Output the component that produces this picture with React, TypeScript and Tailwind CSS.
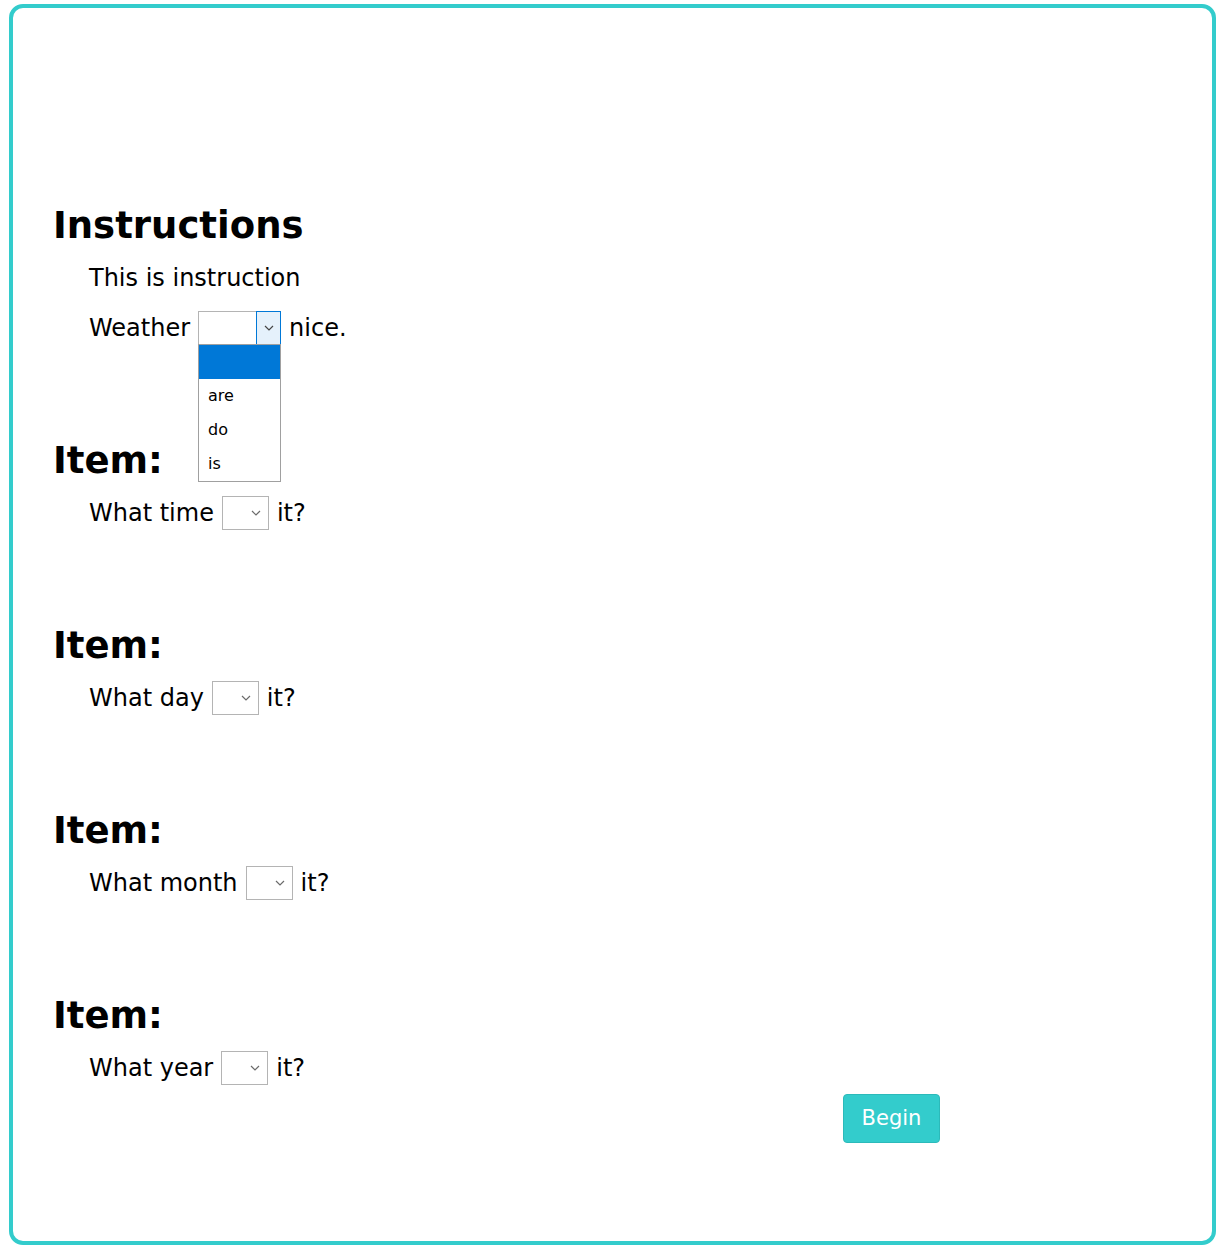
import React from 'react'

function Chevron({ color = '#6b6b6b' }: { color?: string }) {
  return (
    <svg width="10" height="6" viewBox="0 0 10 6" fill="none">
      <path d="M1 1l4 4 4-4" stroke={color} strokeWidth="1.2" />
    </svg>
  )
}

function Blank({ w = 47 }: { w?: number }) {
  return (
    <span
      className="inline-flex items-center justify-end h-[34px] border border-[#b4b4b4] bg-white pr-[7px] align-middle mx-[8px]"
      style={{ width: w }}
    >
      <Chevron />
    </span>
  )
}

function OpenBlank() {
  return (
    <span className="relative inline-flex h-[34px] w-[83px] align-middle mx-[8px]">
      <span className="flex-1 border border-[#b4b4b4] border-r-0 bg-white" />
      <span className="w-[25px] flex items-center justify-center border border-[#0078d7] bg-[#e5f1fb]">
        <Chevron color="#444" />
      </span>
      <div className="absolute left-0 top-[33px] w-[83px] border border-[#a0a0a0] bg-white text-[16px] leading-[34px] z-10">
        <div className="h-[34px] bg-[#0078d7]" />
        <div className="pl-[9px]">are</div>
        <div className="pl-[9px]">do</div>
        <div className="pl-[9px]">is</div>
      </div>
    </span>
  )
}

const items = [
  { before: 'What time', after: 'it?' },
  { before: 'What day', after: 'it?' },
  { before: 'What month', after: 'it?' },
  { before: 'What year', after: 'it?' },
]

export default function App() {
  return (
    <div className="w-[1224px] h-[1251px] bg-white pt-[4px] pl-[9px]" style={{ fontFamily: '"DejaVu Sans", Verdana, sans-serif' }}>
      <div className="w-[1207px] h-[1241px] border-[4px] border-[#33cccc] rounded-[14px] pl-[40px] pt-[198px] text-black">
        <h1 className="text-[37px] font-bold leading-[40px]">Instructions</h1>
        <div className="pl-[36px] text-[24px]">
          <p className="mt-[17px] leading-[30px]">This is instruction</p>
          <p className="mt-[17px] leading-[36px] flex items-center">
            Weather<OpenBlank />nice.
          </p>
        </div>

        {items.map((it, i) => (
          <div key={i} className="mt-[95px]">
            <h2 className="text-[37px] font-bold leading-[40px]">Item:</h2>
            <p className="pl-[36px] mt-[14px] text-[24px] leading-[36px] flex items-center">
              {it.before}<Blank />{it.after}
            </p>
          </div>
        ))}

        <div className="flex pl-[790px] mt-[8px]">
          <button className="w-[97px] h-[49px] rounded-[4px] border border-[#2cbaba] bg-[#33cccc] text-white text-[21px]">Begin</button>
        </div>
      </div>
    </div>
  )
}
